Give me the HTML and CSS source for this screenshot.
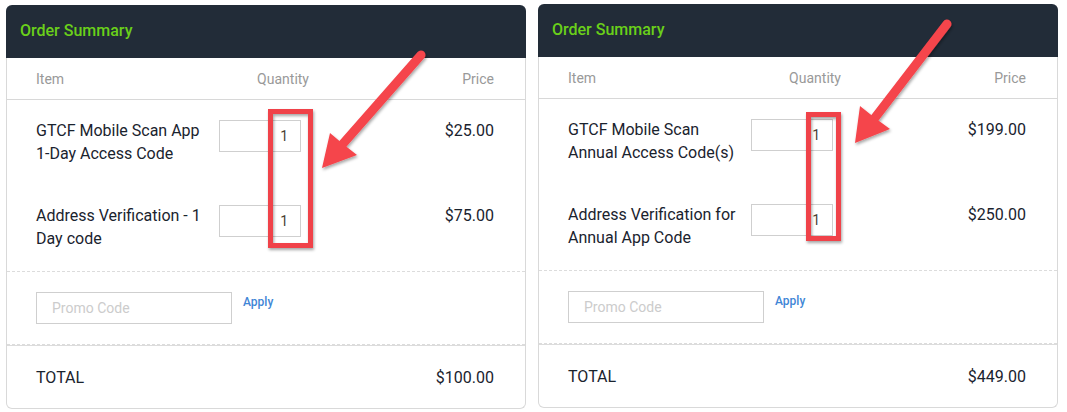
FILE: index.html
```html
<!DOCTYPE html>
<html lang="en">
<head>
<meta charset="utf-8">
<title>Order Summary</title>
<link rel="stylesheet" href="styles.css">
</head>
<body>
<div class="page">
  <section class="card">
    <header class="card-head">Order Summary</header>
    <div class="cols">
      <span>Item</span>
      <span class="col-qty">Quantity</span>
      <span class="col-price">Price</span>
    </div>
    <div class="items">
      <div class="row">
        <div class="name">GTCF Mobile Scan App 1-Day Access Code</div>
        <div class="qty"><input class="qty-input" type="text" value="1"></div>
        <div class="price">$25.00</div>
      </div>
      <div class="row">
        <div class="name">Address Verification - 1 Day code</div>
        <div class="qty"><input class="qty-input" type="text" value="1"></div>
        <div class="price">$75.00</div>
      </div>
    </div>
    <div class="promo">
      <input class="promo-input" type="text" placeholder="Promo Code">
      <a class="apply" href="#">Apply</a>
    </div>
    <div class="total">
      <span>TOTAL</span>
      <span>$100.00</span>
    </div>
  </section>

  <section class="card card-raised">
    <header class="card-head">Order Summary</header>
    <div class="cols">
      <span>Item</span>
      <span class="col-qty">Quantity</span>
      <span class="col-price">Price</span>
    </div>
    <div class="items">
      <div class="row">
        <div class="name">GTCF Mobile Scan Annual Access Code(s)</div>
        <div class="qty"><input class="qty-input" type="text" value="1"></div>
        <div class="price">$199.00</div>
      </div>
      <div class="row">
        <div class="name">Address Verification for Annual App Code</div>
        <div class="qty"><input class="qty-input" type="text" value="1"></div>
        <div class="price">$250.00</div>
      </div>
    </div>
    <div class="promo">
      <input class="promo-input" type="text" placeholder="Promo Code">
      <a class="apply" href="#">Apply</a>
    </div>
    <div class="total">
      <span>TOTAL</span>
      <span>$449.00</span>
    </div>
  </section>
</div>

<svg class="annotations" width="1067" height="412" viewBox="0 0 1067 412" aria-hidden="true">
  <defs>
    <filter id="shadow" x="-20%" y="-20%" width="140%" height="140%">
      <feDropShadow dx="1" dy="2" stdDeviation="1.6" flood-color="#000" flood-opacity="0.35"/>
    </filter>
  </defs>
  <g filter="url(#shadow)">
    <rect x="270.5" y="111.5" width="40" height="134" fill="none" stroke="#f0424a" stroke-width="5"/>
    <line x1="421" y1="55" x2="341" y2="146" stroke="#f5444b" stroke-width="9" stroke-linecap="round"/>
    <polygon points="322,168 330,133 343,144 357,155" fill="#f5444b"/>
  </g>
  <g filter="url(#shadow)">
    <rect x="808.5" y="114.5" width="30" height="124" fill="none" stroke="#f0424a" stroke-width="5"/>
    <line x1="947" y1="24" x2="874" y2="119" stroke="#f5444b" stroke-width="9" stroke-linecap="round"/>
    <polygon points="855,143 860,106 875,118 890,129" fill="#f5444b"/>
  </g>
</svg>
</body>
</html>
```

FILE: styles.css
```css
* { box-sizing: border-box; }

html, body {
  margin: 0;
  padding: 0;
  background: #ffffff;
}

body {
  font-family: Roboto, "Liberation Sans", Arial, sans-serif;
  color: #1a232e;
  position: relative;
  width: 1067px;
  height: 412px;
  overflow: hidden;
}

.page {
  display: flex;
  align-items: flex-start;
  gap: 12px;
  padding: 5px 0 0 6px;
}

.card {
  width: 520px;
  border: 1px solid #d9d9d9;
  border-top: none;
  border-radius: 6px;
  background: #fff;
}

.card-raised {
  margin-top: -1px;
}

.card-head {
  height: 53px;
  margin: 0 -1px;
  padding: 0 0 3px 14px;
  display: flex;
  align-items: center;
  background: #222c38;
  border-radius: 6px 6px 0 0;
  color: #6ad01a;
  font-size: 16px;
  font-weight: 500;
}

.cols {
  display: grid;
  grid-template-columns: 183px 90px 1fr;
  align-items: center;
  height: 42px;
  padding: 0 31px 0 29px;
  border-bottom: 1px solid #d8d8d8;
  color: #999999;
  font-size: 14px;
}

.col-qty { text-align: right; }
.col-price { text-align: right; }

.items {
  padding: 19px 31px 21px 29px;
  display: flex;
  flex-direction: column;
  gap: 39px;
}

.row {
  display: grid;
  grid-template-columns: 183px 90px 1fr;
  align-items: start;
  font-size: 16px;
  line-height: 23px;
}

.name {
  padding-right: 10px;
}

.qty {
  padding-top: 1px;
}

.qty-input {
  display: block;
  width: 82px;
  height: 32px;
  border: 1px solid #cfcfcf;
  border-radius: 0;
  padding: 0 12px 0 0;
  text-align: right;
  font-family: inherit;
  font-size: 14px;
  color: #4a3f35;
  background: #fff;
}

.price {
  text-align: right;
}

.promo {
  display: flex;
  align-items: flex-start;
  gap: 11px;
  padding: 20px 29px 20px;
  border-top: 1px dashed #dcdcdc;
  border-bottom: 1px dashed #dcdcdc;
}

.promo-input {
  display: block;
  width: 196px;
  height: 32px;
  border: 1px solid #cfcfcf;
  border-radius: 0;
  padding: 0 0 0 15px;
  font-family: inherit;
  font-size: 14px;
  color: #333;
}

.promo-input::placeholder {
  color: #cccccc;
}

.apply {
  margin-top: 3px;
  color: #3f86d6;
  font-size: 12px;
  font-weight: 500;
  text-decoration: none;
}

.total {
  display: flex;
  justify-content: space-between;
  align-items: center;
  height: 63px;
  padding: 0 31px 0 29px;
  border-top: 1px solid #dcdcdc;
  font-size: 16px;
}

.annotations {
  position: absolute;
  left: 0;
  top: 0;
  pointer-events: none;
}
```
